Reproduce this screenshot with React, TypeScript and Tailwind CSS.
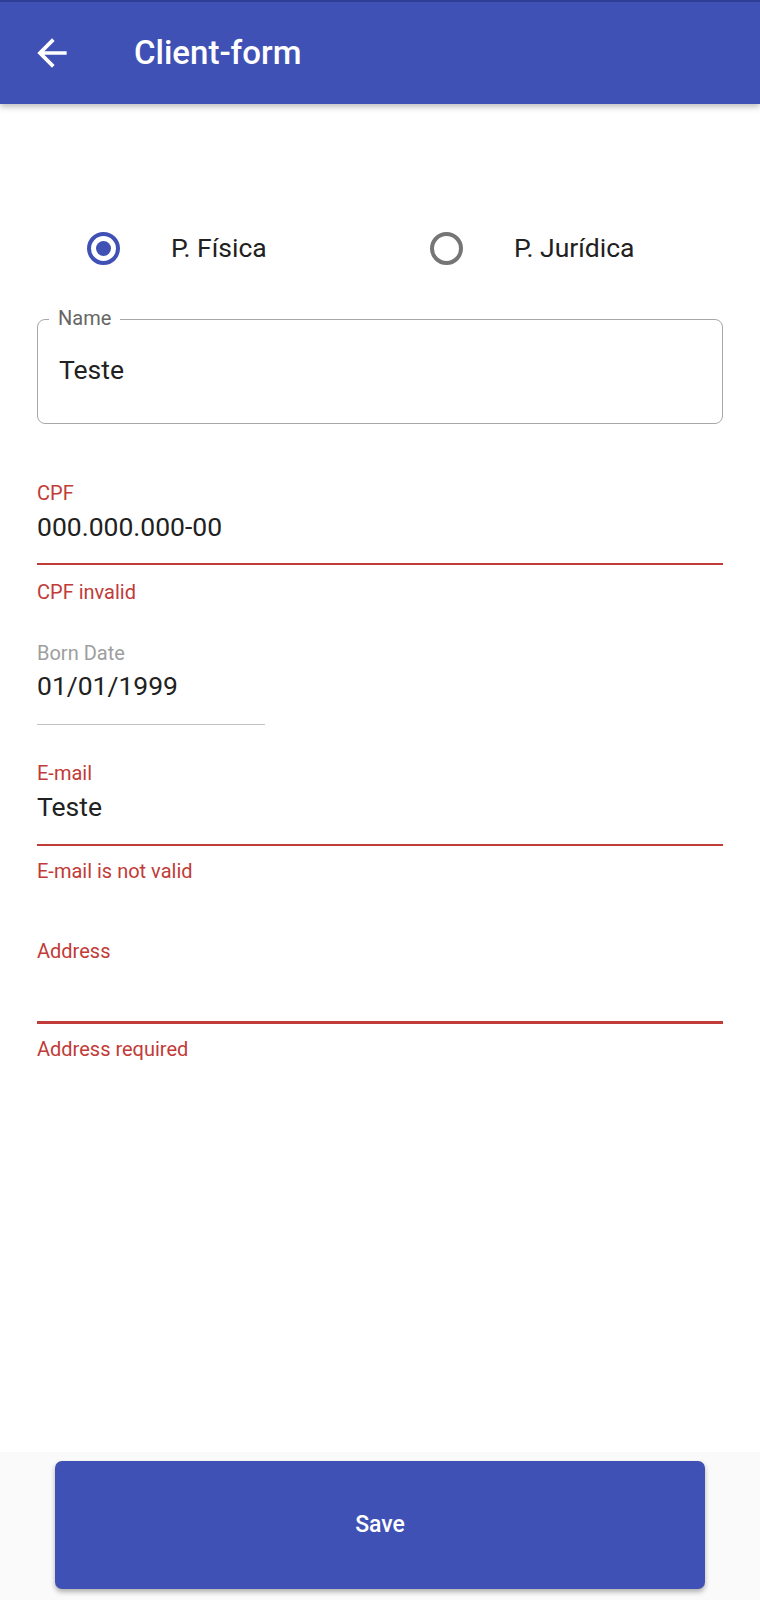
import React from "react";

function Radio({ checked }: { checked: boolean }) {
  return checked ? (
    <div className="w-[33px] h-[33px] rounded-full border-[4px] border-[#3f51b5] flex items-center justify-center shrink-0">
      <div className="w-[15px] h-[15px] rounded-full bg-[#3f51b5]" />
    </div>
  ) : (
    <div className="w-[33px] h-[33px] rounded-full border-[4px] border-[#757575] shrink-0" />
  );
}

export default function App() {
  return (
    <div className="w-[760px] h-[1600px] flex flex-col bg-white font-['Roboto','Liberation_Sans',sans-serif] text-[#212121]">
      <header className="h-[104px] shrink-0 bg-[#3f51b5] border-t-2 border-[#2e3d96] flex items-center shadow-[0_3px_6px_rgba(0,0,0,0.25)] z-10">
        <svg className="ml-[30px] w-[44px] h-[44px]" viewBox="0 0 24 24" fill="#ffffff">
          <path d="M20 11H7.83l5.59-5.59L12 4l-8 8 8 8 1.41-1.41L7.83 13H20v-2z" />
        </svg>
        <h1 className="ml-[60px] text-[33px] leading-[40px] font-medium text-white">Client-form</h1>
      </header>

      <main className="flex-1 px-[37px] flex flex-col">
        <div className="mt-[124px] h-[40px] flex items-center pl-[50px]">
          <div className="w-[343px] flex items-center gap-[51px]">
            <Radio checked />
            <span className="text-[26.5px] leading-[30px]">P. Física</span>
          </div>
          <div className="flex items-center gap-[51px]">
            <Radio checked={false} />
            <span className="text-[26.5px] leading-[30px]">P. Jurídica</span>
          </div>
        </div>

        <div className="relative mt-[51px] h-[105px] border border-[#a8a8a8] rounded-[8px] pl-[21px] pt-[35px]">
          <span className="absolute left-[11px] top-[-14px] px-[9px] bg-white text-[20px] leading-[24px] text-[#666666]">Name</span>
          <div className="text-[26.5px] leading-[30px]">Teste</div>
        </div>

        {/* CPF */}
        <div className="mt-[57px] text-[20px] leading-[24px] text-[#c13b38]">CPF</div>
        <div className="mt-[7px] text-[26.5px] leading-[30px]">000.000.000-00</div>
        <div className="mt-[21px] h-[2px] bg-[#c13b38]" />
        <div className="mt-[15px] text-[20px] leading-[24px] text-[#c13b38]">CPF invalid</div>

        {/* Born Date */}
        <div className="mt-[37px] text-[20px] leading-[24px] text-[#9e9e9e]">Born Date</div>
        <div className="mt-[6px] text-[26.5px] leading-[30px]">01/01/1999</div>
        <div className="mt-[23px] h-px w-[228px] bg-[#c2c2c2]" />

        {/* E-mail */}
        <div className="mt-[36px] text-[20px] leading-[24px] text-[#c13b38]">E-mail</div>
        <div className="mt-[7px] text-[26.5px] leading-[30px]">Teste</div>
        <div className="mt-[22px] h-[2px] bg-[#c13b38]" />
        <div className="mt-[13px] text-[20px] leading-[24px] text-[#c13b38]">E-mail is not valid</div>

        {/* Address */}
        <div className="mt-[56px] text-[20px] leading-[24px] text-[#c13b38]">Address</div>
        <div className="mt-[58px] h-[3px] bg-[#c13b38]" />
        <div className="mt-[13px] text-[20px] leading-[24px] text-[#c13b38]">Address required</div>
      </main>

      <footer className="h-[148px] shrink-0 bg-[#fafafa] pt-[9px] px-[55px]">
        <button className="w-full h-[128px] rounded-[7px] bg-[#3f51b5] shadow-[0_3px_5px_rgba(0,0,0,0.3)] flex items-center justify-center">
          <span className="text-[23px] leading-[28px] font-medium text-white">Save</span>
        </button>
      </footer>
    </div>
  );
}
